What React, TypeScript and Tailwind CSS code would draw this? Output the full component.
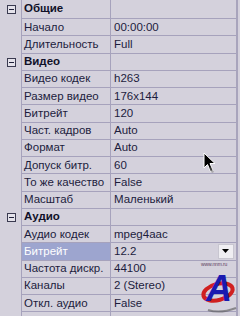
import React from "react";

type Row = { kind: "cat"; label: string } | { kind: "prop"; name: string; value: string; selected?: boolean };

const rows: Row[] = [
  { kind: "cat", label: "Общие" },
  { kind: "prop", name: "Начало", value: "00:00:00" },
  { kind: "prop", name: "Длительность", value: "Full" },
  { kind: "cat", label: "Видео" },
  { kind: "prop", name: "Видео кодек", value: "h263" },
  { kind: "prop", name: "Размер видео", value: "176x144" },
  { kind: "prop", name: "Битрейт", value: "120" },
  { kind: "prop", name: "Част. кадров", value: "Auto" },
  { kind: "prop", name: "Формат", value: "Auto" },
  { kind: "prop", name: "Допуск битр.", value: "60" },
  { kind: "prop", name: "То же качество", value: "False" },
  { kind: "prop", name: "Масштаб", value: "Маленький" },
  { kind: "cat", label: "Аудио" },
  { kind: "prop", name: "Аудио кодек", value: "mpeg4aac" },
  { kind: "prop", name: "Битрейт", value: "12.2", selected: true },
  { kind: "prop", name: "Частота дискр.", value: "44100" },
  { kind: "prop", name: "Каналы", value: "2 (Stereo)" },
  { kind: "prop", name: "Откл. аудио", value: "False" },
  { kind: "prop", name: "", value: "" },
];

function Minus() {
  return (
    <div className="w-[9px] h-[9px] border border-[#3a3a50] bg-[#e4e2ea] flex items-center justify-center">
      <div className="w-[5px] h-px bg-[#20203a]" />
    </div>
  );
}

export default function App() {
  return (
    <div
      className="relative w-[240px] h-[316px] overflow-hidden bg-[#d4d1dc] text-[11.5px] text-[#1c1c3c]"
      style={{ fontFamily: "'Liberation Sans', Arial, sans-serif" }}
    >
      <div className="w-[238px] border-r-2 border-[#a8a4bc] flex flex-col">
        {rows.map((r, i) => (
          <div key={i} className={`flex ${i === 0 ? "h-[19px]" : "h-[17.25px]"}`}>
            <div className="w-[22px] shrink-0 border-r border-[#a6a2bc] flex items-center justify-center pl-px">
              {r.kind === "cat" ? <Minus /> : null}
            </div>
            {r.kind === "cat" ? (
              <>
                <div className="w-[89px] shrink-0 border-r border-b border-[#a6a2bc] flex items-center pl-[2px] font-bold text-[#101028]">
                  {r.label}
                </div>
                <div className="flex-1 border-b border-[#a6a2bc]" />
              </>
            ) : (
              <>
                <div
                  className={`w-[89px] shrink-0 border-r border-b border-[#a6a2bc] flex items-center pl-[2px] whitespace-nowrap ${
                    r.selected ? "bg-[#9da5cf] text-white" : ""
                  }`}
                >
                  {r.name}
                </div>
                <div className="flex-1 border-b border-[#a6a2bc] flex items-center pl-[3px] whitespace-nowrap">
                  <span className="flex-1">{r.value}</span>
                  {r.selected ? (
                    <div className="w-[16px] h-[15px] mr-[2px] bg-[#efeef2] border border-[#c8c6d0] flex items-center justify-center">
                      <svg width="8" height="5" viewBox="0 0 8 5">
                        <path d="M0 0H7L3.5 4Z" fill="#000" />
                      </svg>
                    </div>
                  ) : null}
                </div>
              </>
            )}
          </div>
        ))}
      </div>

      {/* mouse cursor */}
      <svg className="absolute left-[203px] top-[152px]" width="14" height="22" viewBox="0 0 14 22">
        <path d="M1 1 L1 16 L4.5 12.5 L7.5 19.5 L10 18.5 L7 11.5 L12 11.5 Z" fill="#000" stroke="#fff" strokeWidth="1" />
        <path d="M6 16 L9 21 L11 20 L8 15Z" fill="#777" opacity="0.5" />
      </svg>

      {/* watermark logo */}
      <div className="absolute left-[196px] top-[260px] w-[44px] h-[56px]">
        <div className="absolute left-[5px] top-[2px] text-[5px] leading-none text-[#604060] tracking-tight">
          www.nnm.ru
        </div>
        <svg className="absolute left-0 top-[10px]" width="44" height="46" viewBox="0 0 44 46">
          <ellipse cx="22" cy="22" rx="15" ry="8" fill="none" stroke="#d02020" strokeWidth="4" transform="rotate(-15 22 22)" />
          <path d="M12 40 Q24 44 40 38" stroke="#555" strokeWidth="2" fill="none" opacity="0.6" />
        </svg>
        <div className="absolute left-[10px] top-[11px] text-[36px] leading-none font-bold italic text-[#1a1ab0]">
          A
        </div>
      </div>
    </div>
  );
}
